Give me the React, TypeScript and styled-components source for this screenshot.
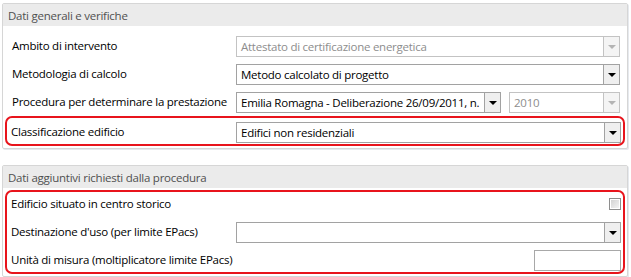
import React from "react";
import styled, { createGlobalStyle, css } from "styled-components";

const Global = createGlobalStyle`
  html, body { margin: 0; padding: 0; background: #ffffff; }
  body {
    font-family: "Open Sans", "Noto Sans", sans-serif;
    font-size: 11.5px;
    letter-spacing: -0.25px;
    color: #000;
  }
`;

const Page = styled.div`
  width: 631px;
  height: 277px;
  padding: 3px 3px 0 2px;
  box-sizing: border-box;
  display: flex;
  flex-direction: column;
  gap: 16px;
`;

const Panel = styled.section`
  border: 1px solid #d6d6d6;
  border-radius: 2px;
  box-shadow: 1px 1px 0 #e6e9ee;
  background: #fff;
`;

const PanelHeader = styled.div`
  height: 22px;
  background: #ebebeb;
  color: #505050;
  display: flex;
  align-items: center;
  padding-left: 5px;
`;

const PanelBody = styled.div<{ $pt: number; $pb: number }>`
  padding: ${(p) => p.$pt}px 2px ${(p) => p.$pb}px 2px;
  display: flex;
  flex-direction: column;
`;

const Rows = styled.div<{ $gap: number }>`
  display: flex;
  flex-direction: column;
  gap: ${(p) => p.$gap}px;
  padding: 0 5px 0 7px;
`;

const Highlight = styled.div<{ $pt: number; $pb: number }>`
  border: 2px solid #e8141c;
  border-radius: 7px;
  padding: ${(p) => p.$pt}px 2px ${(p) => p.$pb}px 4px;
  display: flex;
  flex-direction: column;
  gap: 7px;
`;

const Row = styled.div<{ $h?: number; $col: number }>`
  display: grid;
  grid-template-columns: ${(p) => p.$col}px minmax(0, 1fr);
  align-items: center;
  height: ${(p) => p.$h ?? 21}px;
`;

const Label = styled.span`
  white-space: nowrap;
  margin-top: -2px;
`;

const Controls = styled.div`
  display: flex;
  gap: 8px;
  justify-content: flex-end;
  height: 100%;
  align-items: center;
  min-width: 0;
`;

const SelectBox = styled.div<{ $disabled?: boolean; $w?: number }>`
  height: 21px;
  box-sizing: border-box;
  display: flex;
  align-items: stretch;
  min-width: 0;
  border: 1px solid ${(p) => (p.$disabled ? "#c3c3c3" : "#a2a2a2")};
  background: #fff;
  ${(p) => (p.$w ? css`width: ${p.$w}px; flex: none;` : css`flex: 1;`)}
`;

const SelectText = styled.span<{ $disabled?: boolean }>`
  flex: 1;
  min-width: 0;
  display: flex;
  align-items: center;
  padding-left: 4px;
  color: ${(p) => (p.$disabled ? "#8d8d8d" : "#000")};
  white-space: nowrap;
  overflow: hidden;
`;

const DropButton = styled.span<{ $disabled?: boolean }>`
  width: 15px;
  flex: none;
  border-left: 1px solid ${(p) => (p.$disabled ? "#c3c3c3" : "#a2a2a2")};
  background: ${(p) => (p.$disabled ? "#f4f4f4" : "#efefef")};
  display: flex;
  align-items: center;
  justify-content: center;
`;

const Arrow = styled.span<{ $disabled?: boolean }>`
  width: 0;
  height: 0;
  border-left: 4px solid transparent;
  border-right: 4px solid transparent;
  border-top: 4px solid ${(p) => (p.$disabled ? "#b4b4b4" : "#000")};
`;

const TextInput = styled.div<{ $w: number }>`
  width: ${(p) => p.$w}px;
  height: 21px;
  box-sizing: border-box;
  border: 1px solid #a8a8a8;
  background: #fff;
`;

const Check = styled.span`
  width: 12px;
  height: 12px;
  box-sizing: border-box;
  border: 1px solid #8e8e8e;
  background: linear-gradient(135deg, #cfcfcf, #f6f6f6);
  box-shadow: inset 0 0 0 1px #fff;
`;

function Select({ value, disabled, width }: { value: string; disabled?: boolean; width?: number }) {
  return (
    <SelectBox $disabled={disabled} $w={width}>
      <SelectText $disabled={disabled}>{value}</SelectText>
      <DropButton $disabled={disabled}>
        <Arrow $disabled={disabled} />
      </DropButton>
    </SelectBox>
  );
}

export default function App() {
  return (
    <>
      <Global />
      <Page>
        <Panel>
          <PanelHeader>Dati generali e verifiche</PanelHeader>
          <PanelBody $pt={10} $pb={2}>
            <Rows $gap={7}>
              <Row $col={224}>
                <Label>Ambito di intervento</Label>
                <Controls>
                  <Select value="Attestato di certificazione energetica" disabled />
                </Controls>
              </Row>
              <Row $col={224}>
                <Label>Metodologia di calcolo</Label>
                <Controls>
                  <Select value="Metodo calcolato di progetto" />
                </Controls>
              </Row>
              <Row $col={224}>
                <Label>Procedura per determinare la prestazione</Label>
                <Controls>
                  <Select value="Emilia Romagna - Deliberazione 26/09/2011, n." />
                  <Select value="2010" disabled width={111} />
                </Controls>
              </Row>
            </Rows>
            <Highlight $pt={4} $pb={2} style={{ marginTop: 3 }}>
              <Row $h={20} $col={225}>
                <Label>Classificazione edificio</Label>
                <Controls>
                  <Select value="Edifici non residenziali" />
                </Controls>
              </Row>
            </Highlight>
          </PanelBody>
        </Panel>
        <Panel>
          <PanelHeader>Dati aggiuntivi richiesti dalla procedura</PanelHeader>
          <PanelBody $pt={2} $pb={2}>
            <Highlight $pt={1} $pb={1}>
              <Row $h={22} $col={225}>
                <Label>Edificio situato in centro storico</Label>
                <Controls>
                  <Check />
                </Controls>
              </Row>
              <Row $col={225}>
                <Label>Destinazione d'uso (per limite EPacs)</Label>
                <Controls>
                  <Select value="" />
                </Controls>
              </Row>
              <Row $col={225}>
                <Label>Unità di misura (moltiplicatore limite EPacs)</Label>
                <Controls>
                  <TextInput $w={87} />
                </Controls>
              </Row>
            </Highlight>
          </PanelBody>
        </Panel>
      </Page>
    </>
  );
}
